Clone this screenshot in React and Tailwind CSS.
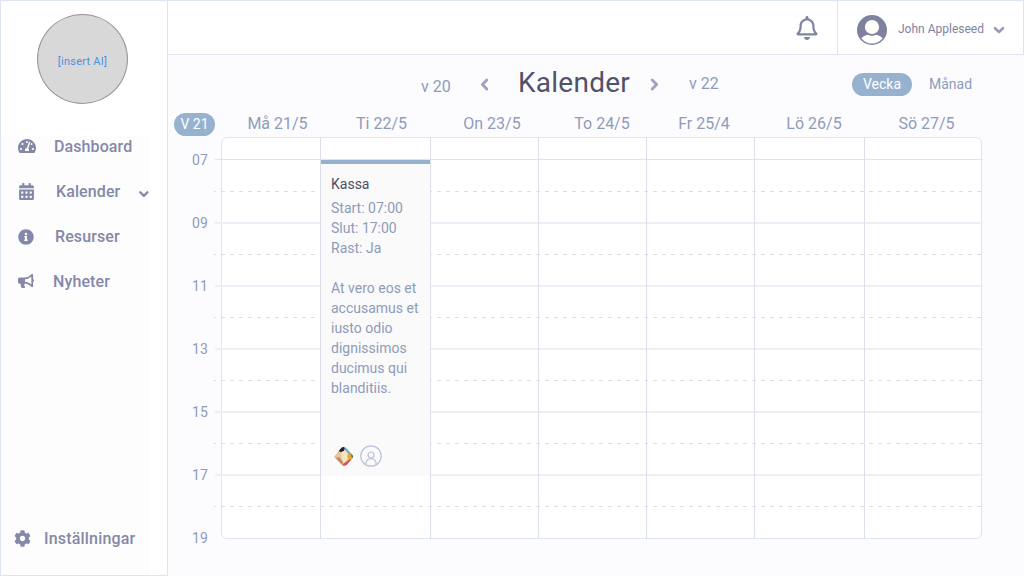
import React from "react";
import { FaTachometerAlt, FaCalendarAlt, FaInfoCircle, FaBullhorn, FaCog, FaRegBell } from "react-icons/fa";

const days = [
  { label: "Må 21/5", head: "w-[114px]", col: "w-[98px]" },
  { label: "Ti 22/5", head: "w-[94px]", col: "w-[109px]" },
  { label: "On 23/5", head: "w-[127px]", col: "w-[107px]" },
  { label: "To 24/5", head: "w-[93px]", col: "w-[107px]" },
  { label: "Fr 25/4", head: "w-[111px]", col: "w-[107px]" },
  { label: "Lö 26/5", head: "w-[109px]", col: "w-[109px]" },
  { label: "Sö 27/5", head: "w-[116px]", col: "flex-1" },
];
const hours = ["07", "09", "11", "13", "15", "17", "19"];
const slots = ["07", "09", "11", "13", "15", "17"];

function Chevron({ className, d, width = 2.6 }) {
  return (
    <svg className={className} viewBox="0 0 12 12" fill="none" stroke="currentColor" strokeWidth={width} strokeLinecap="round" strokeLinejoin="round">
      <path d={d} />
    </svg>
  );
}

function NavItem({ icon, label, gap, children }) {
  return (
    <a className="flex h-[45px] items-center pl-[17px]">
      <span className="flex w-[18px] shrink-0">{icon}</span>
      <span className={gap}>{label}</span>
      {children}
    </a>
  );
}

function Sidebar() {
  return (
    <aside className="flex w-[168px] shrink-0 flex-col border-x border-b border-[#dfe4f2] bg-white text-[16px] leading-[20px] font-medium tracking-[0.1px] text-[#8588a8]">
      <div className="h-[136px] shrink-0 pt-[13px] pl-[36px]">
        <div className="flex h-[90px] w-[91px] items-center justify-center rounded-[50%] border border-[#979797] bg-[#d8d8d8] pt-[5px] text-[11px] font-normal tracking-[0.25px] text-[#4a90e2]">
          [insert AI]
        </div>
      </div>
      <nav className="-mt-[1px] flex w-[149px] flex-1 flex-col bg-[#fdfdfe]">
        <div className="-mt-[12px]">
          <NavItem icon={<FaTachometerAlt className="-mt-px h-[18px] w-[18px]" />} label="Dashboard" gap="ml-[18px]" />
          <NavItem icon={<FaCalendarAlt className="-mt-px h-[17px] w-[17px]" />} label="Kalender" gap="ml-[20px]">
            <Chevron className="mt-[4px] ml-[18px] h-[12px] w-[12px]" d="M2.3 4.2 6 7.9l3.7-3.7" width={2.4} />
          </NavItem>
          <NavItem icon={<FaInfoCircle className="h-[16px] w-[16px]" />} label="Resurser" gap="ml-[19px]" />
          <NavItem icon={<FaBullhorn className="-mt-px h-[16px] w-[16px]" />} label="Nyheter" gap="ml-[17px]" />
        </div>
        <a className="mt-auto mb-[14px] flex h-[45px] items-center pl-[13px]">
          <FaCog className="h-[17px] w-[17px]" />
          <span className="ml-[13px] tracking-[0.18px]">Inställningar</span>
        </a>
      </nav>
    </aside>
  );
}

function TopBar() {
  return (
    <header className="flex h-[54px] shrink-0 justify-end border-r border-b border-[#dfe4f2] bg-white text-[#8083a3]">
      <div className="flex w-[41px] items-center">
        <FaRegBell className="h-[24px] w-[22px]" />
      </div>
      <div className="flex w-[186px] items-center border-l border-[#dfe4f2] pl-[19px]">
        <svg className="mt-[5px] h-[30px] w-[30px]" viewBox="0 0 30 30">
          <circle cx="15" cy="15" r="15" fill="#7f819f" />
          <circle cx="15" cy="12" r="7.1" fill="#fff" />
          <path d="M4.4 23.2c2.1-2.2 4.5-3.1 6.4-3.5 2.7 1.4 5.7 1.4 8.4 0 1.9.4 4.3 1.3 6.4 3.5C23 26.7 19.4 28.4 15 28.4S7 26.7 4.4 23.2Z" fill="#fff" />
        </svg>
        <span className="mt-[3px] ml-[11px] text-[12px] whitespace-nowrap">John Appleseed</span>
        <Chevron className="mt-[4px] ml-[9px] h-[12px] w-[12px] text-[#9a9cb8]" d="M2 4.2 6 8l4-3.8" />
      </div>
    </header>
  );
}

function Toolbar() {
  return (
    <div className="flex h-[56px] shrink-0 items-start text-[14px] leading-[20px] whitespace-nowrap text-[#8f9bba]">
      <span className="mt-[22px] ml-[253px] w-[58px] text-[16px]">v 20</span>
      <Chevron className="mt-[22px] h-[15px] w-[12px] text-[#a0a2bd]" d="M7.8 1.5 3.4 6l4.4 4.5" width={2.9} />
      <h1 className="mt-[9px] ml-[27px] w-[130px] text-[28px] leading-[38px] tracking-[0.25px] text-[#50526a]">Kalender</h1>
      <Chevron className="mt-[22px] h-[15px] w-[12px] text-[#a0a2bd]" d="M4.2 1.5 8.6 6l-4.4 4.5" width={2.9} />
      <span className="mt-[19px] ml-[29px] w-[30px] text-[16px]">v 22</span>
      <button className="mt-[18px] ml-[133px] h-[23px] w-[60px] rounded-full bg-[#97b2cf] pb-px text-white">Vecka</button>
      <button className="mt-[19px] ml-[17px]">Månad</button>
    </div>
  );
}

function EventCard() {
  return (
    <article className="mt-[23px] flex h-[316px] flex-col border-t-4 border-[#97b2cf] bg-[#fafafa] px-[10px] text-[14px] leading-[20px] text-[#8f9bba]">
      <h2 className="mt-[10px] mb-[4px] text-[#4d4f68]">Kassa</h2>
      <p>Start: 07:00</p>
      <p>Slut: 17:00</p>
      <p>Rast: Ja</p>
      <p className="mt-[20px] whitespace-nowrap">At vero eos et<br />accusamus et<br />iusto odio<br />dignissimos<br />ducimus qui<br />blanditiis.</p>
      <div className="mt-[47px] flex items-center">
        <svg className="ml-[2px] h-[21px] w-[21px]" viewBox="0 0 21 21">
          <defs>
            <clipPath id="face"><path d="M.8 11 8.5 1.5Q11 .2 13.5 2l6 7q1 1.5 0 3l-5.7 6.7q-2.6 2-5 .3Z" /></clipPath>
          </defs>
          <g clipPath="url(#face)">
            <path fill="#e7c3a0" d="M0 0h21v21H0z" />
            <path fill="#28203b" d="m5 5 5-5 2 2-1 3-3 1Z" />
            <path fill="#58b9d0" d="m11 0 9 9-4 0-4-5Z" />
            <path fill="#f5e3bd" d="m8 7 4-3 4 5-4 9-3-3Z" />
            <path fill="#f4a61f" d="m14 10 2-3 4 4-4 3Z" />
            <path fill="#397b4e" d="m18 8 3 1v5l-2-1Z" />
            <path fill="#d94e54" d="m9 21 1-3 7-5h4l-7 8Z" />
            <path fill="#c08a62" d="m3 12 3-1 4 5-1 3Z" />
          </g>
        </svg>
        <svg className="ml-[6px] h-[22px] w-[22px]" viewBox="0 0 22 22" fill="none" stroke="#b8c1df" strokeWidth="1.2">
          <circle cx="11" cy="11" r="10.2" />
          <circle cx="11" cy="10" r="3" />
          <path d="M5.9 19.5v-1.2a5.1 4.7 0 0 1 10.2 0v1.2" />
        </svg>
      </div>
    </article>
  );
}

function WeekGrid() {
  return (
    <div className="flex">
      <div className="flex w-[46px] shrink-0 flex-col pt-[13px] pr-[6px] text-right text-[14px] leading-[20px] tracking-[0.1px] text-[#8f9bba]">
        {hours.map((h) => <span key={h} className="h-[63px]">{h}</span>)}
      </div>
      <div className="grid w-[769px]">
        <div className="col-start-1 row-start-1 ml-[7px] h-[402px] w-[761px] rounded-[6px] border border-[#dfe4f2] bg-white" />
        <div className="col-start-1 row-start-1 pt-[22px]">
          {slots.map((s, i) => (
            <div key={s} className="flex h-[63px] flex-col">
              <div className={i === 0 ? "ml-px h-px bg-[#dfe3f0]" : "ml-px h-[2px] bg-[#eceff6]"} />
              <div className="mt-auto mb-[30px] h-px w-[768px] bg-[repeating-linear-gradient(90deg,#dcdde8_0_4px,transparent_4px_9px)] bg-[position:-2px_0]" />
            </div>
          ))}
        </div>
        <div className="col-start-1 row-start-1 ml-[8px] flex h-[401px] w-[759px]">
          {days.map((d, i) => (
            <div key={d.label} className={`${d.col} box-content shrink-0 ${i < 6 ? "border-r border-[#dcdeeb]" : ""}`}>
              {i === 1 && <EventCard />}
            </div>
          ))}
        </div>
      </div>
    </div>
  );
}

export default function App() {
  return (
    <div className="flex h-[576px] w-[1024px] overflow-hidden border-t border-[#dfe4f2] bg-[#fcfcff] font-[Roboto,sans-serif]">
      <Sidebar />
      <main className="flex min-w-0 flex-1 flex-col">
        <TopBar />
        <Toolbar />
        <div className="flex h-[26px] shrink-0 items-center text-[16px] whitespace-nowrap text-[#8f9bba]">
          <span className="ml-[6px] flex h-[23px] w-[41px] items-center justify-center rounded-full bg-[#97b2cf] text-[14px] text-white">V 21</span>
          <div className="ml-[5.5px] flex">
            {days.map((d) => <span key={d.label} className={`${d.head} shrink-0 text-center`}>{d.label}</span>)}
          </div>
        </div>
        <WeekGrid />
      </main>
    </div>
  );
}
